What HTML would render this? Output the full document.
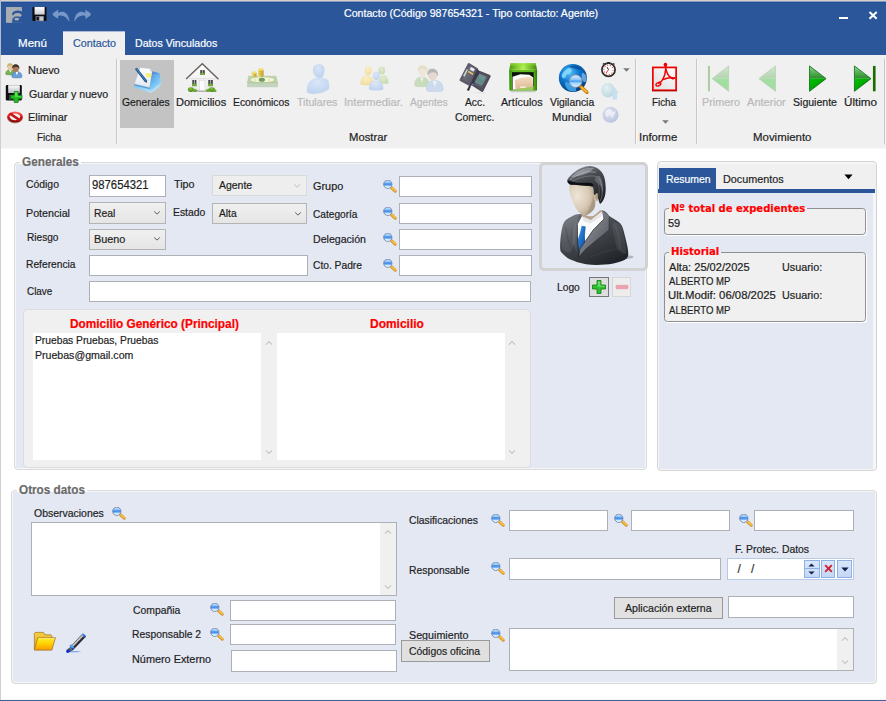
<!DOCTYPE html>
<html lang="es">
<head>
<meta charset="utf-8">
<title>Contacto (Código 987654321 - Tipo contacto: Agente)</title>
<style>
html,body{margin:0;padding:0;}
body{width:886px;height:701px;overflow:hidden;background:#fff;font-family:"Liberation Sans",sans-serif;}
#app{position:relative;width:886px;height:701px;overflow:hidden;background:#fff;}
#app div,#app svg,#app .t{position:absolute;box-sizing:border-box;}
.t{white-space:nowrap;line-height:1;transform-origin:0 50%;-webkit-text-stroke:0.2px;}
</style>
</head>
<body>
<div id="app">
<svg style="left:0;top:0" width="0" height="0"><defs><linearGradient id="fl2" x1="0" y1="0" x2="0" y2="1"><stop offset="0" stop-color="#ffffff"/><stop offset="1" stop-color="#b8bcc6"/></linearGradient><linearGradient id="el1" x1="0" y1="0" x2="0" y2="1"><stop offset="0" stop-color="#ff6a5a"/><stop offset="0.5" stop-color="#d01818"/><stop offset="1" stop-color="#7a0606"/></linearGradient><linearGradient id="gp1" x1="0.2" y1="0" x2="0.8" y2="1"><stop offset="0" stop-color="#4f7ccc"/><stop offset="0.45" stop-color="#62b4ee"/><stop offset="1" stop-color="#a8dcf6"/></linearGradient><linearGradient id="gp3" x1="0" y1="0" x2="1" y2="1"><stop offset="0" stop-color="#7cc4f0"/><stop offset="1" stop-color="#c4e8f8"/></linearGradient><linearGradient id="gp2" x1="0" y1="0" x2="0" y2="1"><stop offset="0" stop-color="#ffffff"/><stop offset="1" stop-color="#e2e9f4"/></linearGradient><linearGradient id="hs1" x1="0" y1="0" x2="0" y2="1"><stop offset="0" stop-color="#ffffff"/><stop offset="1" stop-color="#e9e9e9"/></linearGradient><radialGradient id="hs2" cx="0.45" cy="0.35" r="0.7"><stop offset="0" stop-color="#8cc83c"/><stop offset="1" stop-color="#3c7a14"/></radialGradient><linearGradient id="mn1" x1="0" y1="0" x2="1" y2="0"><stop offset="0" stop-color="#f4e48a"/><stop offset="0.5" stop-color="#d8bc48"/><stop offset="1" stop-color="#c0a030"/></linearGradient><radialGradient id="tt1" cx="0.45" cy="0.3" r="0.8"><stop offset="0" stop-color="#d6e4f8"/><stop offset="1" stop-color="#b4ccf0"/></radialGradient><radialGradient id="im1" cx="0.45" cy="0.3" r="0.8"><stop offset="0" stop-color="#fbeebc"/><stop offset="1" stop-color="#f2d78a"/></radialGradient><radialGradient id="im2" cx="0.45" cy="0.3" r="0.8"><stop offset="0" stop-color="#dfeacb"/><stop offset="1" stop-color="#bcd4a4"/></radialGradient><radialGradient id="im3" cx="0.45" cy="0.3" r="0.8"><stop offset="0" stop-color="#d8e6f8"/><stop offset="1" stop-color="#b2caee"/></radialGradient><linearGradient id="ac1" x1="0" y1="0" x2="1" y2="1"><stop offset="0" stop-color="#7e7d8a"/><stop offset="1" stop-color="#52515e"/></linearGradient><linearGradient id="ac2" x1="0" y1="0" x2="1" y2="1"><stop offset="0" stop-color="#706f7e"/><stop offset="1" stop-color="#4a4957"/></linearGradient><linearGradient id="ar1" x1="0" y1="0" x2="1" y2="0"><stop offset="0" stop-color="#4e9a12"/><stop offset="0.5" stop-color="#b4f050"/><stop offset="1" stop-color="#3e8a0e"/></linearGradient><linearGradient id="ar2" x1="0" y1="0" x2="1" y2="0"><stop offset="0" stop-color="#2f8a0a"/><stop offset="0.15" stop-color="#62bc1c"/><stop offset="0.85" stop-color="#62bc1c"/><stop offset="1" stop-color="#2a7a08"/></linearGradient><linearGradient id="ar3" x1="0" y1="0" x2="0" y2="1"><stop offset="0" stop-color="#f4dcc0"/><stop offset="1" stop-color="#dcb890"/></linearGradient><radialGradient id="vg1" cx="0.38" cy="0.32" r="0.75"><stop offset="0" stop-color="#58c0f8"/><stop offset="0.45" stop-color="#0c78d0"/><stop offset="1" stop-color="#06306c"/></radialGradient><linearGradient id="vg2" x1="0" y1="0" x2="0" y2="1"><stop offset="0" stop-color="#e4f6ff"/><stop offset="0.42" stop-color="#7cc0f8"/><stop offset="0.5" stop-color="#3c90f0"/><stop offset="0.62" stop-color="#8cd0fc"/><stop offset="1" stop-color="#e8f8ff"/></linearGradient><radialGradient id="sm1" cx="0.4" cy="0.35" r="0.75"><stop offset="0" stop-color="#e4f2f2"/><stop offset="1" stop-color="#a8cede"/></radialGradient><radialGradient id="sm2" cx="0.4" cy="0.35" r="0.75"><stop offset="0" stop-color="#e0e4f2"/><stop offset="1" stop-color="#a8b4d8"/></radialGradient><linearGradient id="pd1" x1="1" y1="0" x2="0" y2="1"><stop offset="0" stop-color="#ffffff"/><stop offset="1" stop-color="#dcdcdc"/></linearGradient><linearGradient id="nvl1" x1="0" y1="0" x2="0" y2="1"><stop offset="0" stop-color="#d2e6ce"/><stop offset="1" stop-color="#b4d4b0"/></linearGradient><linearGradient id="nvl2" x1="1" y1="0" x2="0" y2="1"><stop offset="0" stop-color="#9ee49e"/><stop offset="1" stop-color="#aad4a6"/></linearGradient><linearGradient id="nvd1" x1="0" y1="0" x2="0" y2="1"><stop offset="0" stop-color="#8ad88a"/><stop offset="1" stop-color="#2a8a2a"/></linearGradient><linearGradient id="nvd2" x1="0" y1="0" x2="1" y2="1"><stop offset="0" stop-color="#00c400"/><stop offset="0.6" stop-color="#00a000"/><stop offset="1" stop-color="#0a6a0a"/></linearGradient><linearGradient id="mgl" x1="0" y1="0" x2="0" y2="1"><stop offset="0" stop-color="#c4ecff"/><stop offset="0.3" stop-color="#8ac6fa"/><stop offset="0.46" stop-color="#3f86e8"/><stop offset="0.6" stop-color="#5c9ef0"/><stop offset="0.74" stop-color="#c8ecff"/><stop offset="1" stop-color="#f4fcff"/></linearGradient><linearGradient id="av1" x1="0.2" y1="0" x2="0.8" y2="1"><stop offset="0" stop-color="#7c8086"/><stop offset="0.35" stop-color="#4a4e54"/><stop offset="1" stop-color="#1e2226"/></linearGradient><linearGradient id="av2" x1="0" y1="0" x2="1" y2="1"><stop offset="0" stop-color="#8e9298"/><stop offset="0.5" stop-color="#54585e"/><stop offset="1" stop-color="#2a2e32"/></linearGradient><radialGradient id="av3" cx="0.32" cy="0.38" r="0.8"><stop offset="0" stop-color="#efe6d8"/><stop offset="0.55" stop-color="#d9cab6"/><stop offset="1" stop-color="#a8967e"/></radialGradient><linearGradient id="av4" x1="0.3" y1="0" x2="0.7" y2="1"><stop offset="0" stop-color="#8a8e94"/><stop offset="0.3" stop-color="#4a4d52"/><stop offset="1" stop-color="#1a1c20"/></linearGradient><linearGradient id="av5" x1="0" y1="0" x2="1" y2="1"><stop offset="0" stop-color="#3aa0ec"/><stop offset="1" stop-color="#0a3c9c"/></linearGradient><linearGradient id="av6" x1="0" y1="0" x2="1" y2="1"><stop offset="0" stop-color="#9a9ea4"/><stop offset="1" stop-color="#4c5056"/></linearGradient><linearGradient id="fo1" x1="0" y1="0" x2="0" y2="1"><stop offset="0" stop-color="#ffee30"/><stop offset="0.5" stop-color="#ffd000"/><stop offset="1" stop-color="#ff9c00"/></linearGradient><linearGradient id="fo2" x1="0" y1="0" x2="0" y2="1"><stop offset="0" stop-color="#f8d040"/><stop offset="1" stop-color="#e0a018"/></linearGradient></defs></svg>
<div style="left:0px;top:0px;width:886px;height:701px;background:#fff;"></div>
<div style="left:1px;top:1px;width:885px;height:54px;background:#2b579a;"></div>
<div style="left:0px;top:0px;width:886px;height:1px;background:#d6cfc7;"></div>
<div style="left:1px;top:1px;width:885px;height:1px;background:#8a9cc0;"></div>
<div style="left:1px;top:2px;width:885px;height:1px;background:#1f4d99;"></div>
<div style="left:0px;top:0px;width:1px;height:55px;background:#b4bccc;"></div>
<div style="left:0px;top:55px;width:1px;height:646px;background:#cfcfcf;"></div>
<div style="left:0px;top:700px;width:886px;height:1px;background:#3a62a0;"></div>
<div style="left:1px;top:699px;width:885px;height:1px;background:#fbf7f0;"></div>
<svg style="left:5px;top:6px;" width="19" height="18" viewBox="5 6 19 18"><rect x="6.17" y="7.03" width="15.71" height="15.6" fill="#a9aeb5"/><path d="M11.8 13.97 C11.98 13.27 13.15 11.73 14.29 11.15 C15.43 10.57 17.31 10.34 18.63 10.5 C19.95 10.66 21.61 11.41 22.2 12.13 C22.79 12.85 22.79 14.67 22.2 14.83 C21.61 14.99 19.86 13.32 18.63 13.1 C17.40 12.88 15.73 13.15 14.83 13.53 C13.93 13.91 13.71 15.31 13.21 15.38 C12.71 15.45 11.62 14.68 11.8 13.97Z" fill="#2b579a"/><path d="M22.2 14.83 L22.2 22.63 L12.13 22.63 L12.13 19.17 L14.29 16.78 L18.08 16.13 L20.25 17 L22.2 14.83Z" fill="#2b579a"/><ellipse cx="16.78" cy="19.17" rx="2.38" ry="1.41" fill="#a9aeb5"/><rect x="6.17" y="7.03" width="5.96" height="15.6" fill="#a9aeb5"/><path d="M12.13 20.25 L13.97 17.22 L18.08 16.13 L22.2 16.78 L22.2 22.63 L12.13 22.63Z" fill="none"/></svg>
<svg style="left:31px;top:6px;" width="17" height="17" viewBox="31 6 17 17"><defs><linearGradient id="fl1" x1="0" y1="0" x2="0" y2="1"><stop offset="0" stop-color="#ffffff"/><stop offset="1" stop-color="#c9ccd4"/></linearGradient></defs><rect x="32.39" y="7.03" width="14.08" height="14.08" fill="#0c0c10" rx="0.8"/><rect x="34.55" y="7.03" width="10.08" height="7.58" fill="url(#fl1)"/><rect x="35.64" y="16.13" width="8.23" height="4.98" fill="#8c8f96"/><rect x="36.5" y="16.78" width="2.38" height="3.68" fill="#15151a"/><rect x="39.75" y="16.78" width="3.25" height="3.68" fill="#c4c6cc"/></svg>
<svg style="left:51px;top:8px;" width="20" height="15" viewBox="51 8 20 15"><path d="M52.54 14.29 C52.54 12.84 57.23 10.27 58.17 9.96 C59.11 9.65 57.36 12.14 58.17 12.45 C58.98 12.76 61.52 11.40 63.05 11.8 C64.58 12.20 66.33 13.24 67.38 14.83 C68.43 16.42 69.60 20.93 69.33 21.33 C69.06 21.73 66.99 18.16 65.76 17.22 C64.53 16.28 63.23 15.88 61.96 15.7 C60.70 15.52 58.80 15.64 58.17 16.13 C57.54 16.62 59.11 18.94 58.17 18.63 C57.23 18.32 52.54 15.73 52.54 14.29Z" fill="#7898c8"/></svg>
<svg style="left:72px;top:8px;" width="20" height="15" viewBox="72 8 20 15"><path d="M91 14.29 C91.00 12.84 86.31 10.27 85.37 9.96 C84.43 9.65 86.18 12.14 85.37 12.45 C84.56 12.76 82.02 11.40 80.49 11.8 C78.95 12.20 77.21 13.24 76.16 14.83 C75.11 16.42 73.94 20.93 74.21 21.33 C74.48 21.73 76.55 18.16 77.78 17.22 C79.01 16.28 80.30 15.88 81.57 15.7 C82.83 15.52 84.74 15.64 85.37 16.13 C86.00 16.62 84.43 18.94 85.37 18.63 C86.31 18.32 91.00 15.73 91 14.29Z" fill="#7898c8"/></svg>
<span class="t" style="left:343.82px;top:7.79px;font-size:11px;color:#fff;transform:scaleX(0.9663);">Contacto (Código 987654321 - Tipo contacto: Agente)</span>
<div style="left:839px;top:17px;width:9px;height:2px;background:#fff;"></div>
<svg style="left:867px;top:10px;" width="12" height="11" viewBox="0 0 12 11"><path d="M2.5 1.9 L9.7 8.7 M9.7 1.9 L2.5 8.7" stroke="#fff" stroke-width="2" fill="none"/></svg>
<div style="left:63px;top:31px;width:62px;height:1px;background:#a9b8d4;"></div>
<div style="left:63px;top:32px;width:62px;height:23px;background:#f0f0f0;"></div>
<span class="t" style="left:17.90px;top:37.59px;font-size:11px;color:#fff;transform:scaleX(1.0521);">Menú</span>
<span class="t" style="left:72.81px;top:37.59px;font-size:11px;color:#2b579a;transform:scaleX(0.9777);">Contacto</span>
<span class="t" style="left:134.88px;top:37.59px;font-size:11px;color:#fff;transform:scaleX(0.9637);">Datos Vinculados</span>
<div style="left:1px;top:55px;width:885px;height:93px;background:#f0f0f0;"></div>
<div style="left:1px;top:148px;width:885px;height:1px;background:#f8f8f8;"></div>
<div style="left:116px;top:59px;width:1px;height:85px;background:#c6c6c6;"></div>
<div style="left:117px;top:59px;width:1px;height:85px;background:#f8f8f8;"></div>
<div style="left:635px;top:59px;width:1px;height:85px;background:#c6c6c6;"></div>
<div style="left:636px;top:59px;width:1px;height:85px;background:#f8f8f8;"></div>
<div style="left:696px;top:59px;width:1px;height:85px;background:#c6c6c6;"></div>
<div style="left:697px;top:59px;width:1px;height:85px;background:#f8f8f8;"></div>
<div style="left:884px;top:59px;width:1px;height:85px;background:#c6c6c6;"></div>
<div style="left:885px;top:59px;width:1px;height:85px;background:#f8f8f8;"></div>
<div style="left:120px;top:60px;width:54px;height:68px;background:#c3c3c3;"></div>
<span class="t" style="left:28.35px;top:65.29px;font-size:11px;color:#1e1e1e;transform:scaleX(0.9974);">Nuevo</span>
<span class="t" style="left:28.72px;top:88.59px;font-size:11px;color:#1e1e1e;transform:scaleX(0.9670);">Guardar y nuevo</span>
<span class="t" style="left:28.36px;top:111.59px;font-size:11px;color:#1e1e1e;transform:scaleX(0.9905);">Eliminar</span>
<span class="t" style="left:37.24px;top:131.59px;font-size:11px;color:#1e1e1e;transform:scaleX(0.8989);">Ficha</span>
<span class="t" style="left:121.83px;top:96.79px;font-size:11px;color:#1e1e1e;transform:scaleX(0.9388);">Generales</span>
<span class="t" style="left:175.85px;top:96.79px;font-size:11px;color:#1e1e1e;transform:scaleX(1.0007);">Domicilios</span>
<span class="t" style="left:232.90px;top:96.79px;font-size:11px;color:#1e1e1e;transform:scaleX(0.9426);">Económicos</span>
<span class="t" style="left:296.76px;top:96.79px;font-size:11px;color:#b9b9b9;transform:scaleX(0.9680);">Titulares</span>
<span class="t" style="left:343.94px;top:96.79px;font-size:11px;color:#b9b9b9;transform:scaleX(1.0138);">Intermediar.</span>
<span class="t" style="left:409.85px;top:96.79px;font-size:11px;color:#b9b9b9;transform:scaleX(0.9347);">Agentes</span>
<span class="t" style="left:465.35px;top:96.79px;font-size:11px;color:#1e1e1e;transform:scaleX(0.9346);">Acc.</span>
<span class="t" style="left:455.13px;top:111.59px;font-size:11px;color:#1e1e1e;transform:scaleX(0.9462);">Comerc.</span>
<span class="t" style="left:501.35px;top:96.79px;font-size:11px;color:#1e1e1e;transform:scaleX(0.9707);">Artículos</span>
<span class="t" style="left:549.75px;top:96.79px;font-size:11px;color:#1e1e1e;transform:scaleX(0.9421);">Vigilancia</span>
<span class="t" style="left:552.43px;top:111.59px;font-size:11px;color:#1e1e1e;transform:scaleX(1.0263);">Mundial</span>
<span class="t" style="left:348.83px;top:131.59px;font-size:11px;color:#1e1e1e;transform:scaleX(1.0244);">Mostrar</span>
<span class="t" style="left:652.05px;top:96.79px;font-size:11px;color:#1e1e1e;transform:scaleX(0.8913);">Ficha</span>
<span class="t" style="left:639.02px;top:131.59px;font-size:11px;color:#1e1e1e;transform:scaleX(1.0272);">Informe</span>
<span class="t" style="left:701.66px;top:96.79px;font-size:11px;color:#b9b9b9;transform:scaleX(0.9869);">Primero</span>
<span class="t" style="left:747.25px;top:96.79px;font-size:11px;color:#b9b9b9;transform:scaleX(1.0064);">Anterior</span>
<span class="t" style="left:793.12px;top:96.79px;font-size:11px;color:#1e1e1e;transform:scaleX(0.9588);">Siguiente</span>
<span class="t" style="left:843.50px;top:96.79px;font-size:11px;color:#1e1e1e;transform:scaleX(1.0617);">Último</span>
<span class="t" style="left:753.11px;top:131.59px;font-size:11px;color:#1e1e1e;transform:scaleX(1.0396);">Movimiento</span>
<svg style="left:3px;top:60px;" width="22" height="20" viewBox="3 60 22 20"><g opacity="1"><path d="M5.8 74.2 C5.55 73.68 5.83 72.37 6.17 71.7 C6.51 71.03 7.12 70.52 7.82 70.2 C8.53 69.88 9.54 69.80 10.4 69.8 C11.26 69.80 12.28 69.88 12.98 70.2 C13.69 70.52 14.29 71.03 14.63 71.7 C14.97 72.37 15.25 73.68 15 74.2 C14.75 74.72 14.39 74.70 13.16 74.8 C11.93 74.90 8.87 74.90 7.64 74.8 C6.41 74.70 6.04 74.72 5.8 74.2Z" fill="#78b058" stroke="#4f8a38" stroke-width="0.5"/><path d="M9.3 70.05 L10.4 72.8 L11.5 70.05Z" fill="#ffffff"/><ellipse cx="10.2" cy="67.2" rx="2.76" ry="3.24" fill="#e8c8a0"/><path d="M7.2 67.2 C7.07 67.05 6.89 66.15 7.14 65.55 C7.39 64.95 8.01 63.94 8.7 63.6 C9.38 63.27 10.50 63.24 11.25 63.54 C12.00 63.84 12.86 64.69 13.2 65.4 C13.54 66.11 13.41 67.70 13.26 67.8 C13.11 67.90 12.91 66.38 12.3 66 C11.69 65.62 10.32 65.47 9.6 65.55 C8.88 65.62 8.35 66.17 7.95 66.45 C7.55 66.73 7.33 67.35 7.2 67.2Z" fill="#c8b070"/></g><g opacity="1"><path d="M12 77.08 C11.74 76.46 12.03 74.88 12.39 74.08 C12.75 73.28 13.41 72.66 14.16 72.28 C14.91 71.90 15.99 71.80 16.9 71.8 C17.81 71.80 18.89 71.90 19.64 72.28 C20.39 72.66 21.05 73.28 21.41 74.08 C21.77 74.88 22.06 76.46 21.8 77.08 C21.54 77.70 21.15 77.68 19.84 77.8 C18.53 77.92 15.27 77.92 13.96 77.8 C12.65 77.68 12.26 77.70 12 77.08Z" fill="#6c9ed8" stroke="#3f6fb0" stroke-width="0.5"/><path d="M15.72 72.1 L16.9 75.4 L18.08 72.1Z" fill="#ffffff"/><ellipse cx="15.8" cy="68.5" rx="3.04" ry="3.56" fill="#a87858"/><path d="M12.5 68.5 C12.35 68.34 12.15 67.35 12.43 66.69 C12.71 66.03 13.39 64.91 14.15 64.54 C14.91 64.17 16.14 64.14 16.96 64.47 C17.79 64.80 18.73 65.74 19.1 66.52 C19.47 67.30 19.34 69.05 19.17 69.16 C19.01 69.27 18.78 67.59 18.11 67.18 C17.44 66.77 15.94 66.61 15.14 66.69 C14.34 66.77 13.76 67.37 13.32 67.67 C12.88 67.97 12.65 68.66 12.5 68.5Z" fill="#3a3028"/></g></svg>
<svg style="left:4px;top:84px;" width="20" height="20" viewBox="4 84 20 20"><rect x="5.8" y="85" width="16" height="15.5" fill="#101014" rx="1.2"/><rect x="8.2" y="85.2" width="11.6" height="7.8" fill="url(#fl2)"/><rect x="9.5" y="95" width="9" height="5.5" fill="#70747c"/><rect x="10.4" y="95.8" width="2.6" height="4.2" fill="#18181c"/><path d="M14.2 91.5 L18.2 91.5 L18.2 95.2 L22 95.2 L22 98.8 L18.2 98.8 L18.2 102.5 L14.2 102.5 L14.2 98.8 L10.8 98.8 L10.8 95.2 L14.2 95.2Z" fill="#22c022" stroke="#0b7d0b" stroke-width="0.7" stroke-linejoin="round"/><path d="M15 92.3 L17.4 92.3 L17.4 96 L21.2 96 L21.2 96.8 L15 96.8Z" fill="#7ff07a" opacity="0.65"/></svg>
<svg style="left:5px;top:109px;" width="20" height="17" viewBox="5 109 20 17"><ellipse cx="15" cy="117.8" rx="8" ry="5.6" fill="#5a0808" opacity="0.35"/><ellipse cx="15" cy="117" rx="7.8" ry="5.6" fill="url(#el1)"/><ellipse cx="15" cy="116.8" rx="5.2" ry="3.4" fill="#f4f0f0"/><path d="M10.6 114 L19.4 119.8" stroke="#c41414" stroke-width="2.6" stroke-linecap="round"/></svg>
<svg style="left:131px;top:63px;" width="33" height="33" viewBox="131 63 33 33"><path d="M134.57 84.86 L150 88.86 L160.86 84.86 L160.29 86.57 L151.14 92.97 L134.57 87.83Z" fill="url(#gp3)" stroke-linejoin="round"/><path d="M151.14 90 L160.86 80 L160.97 82.57 L160.29 85.43 L151.43 92.29Z" fill="#b4e0f6" stroke-linejoin="round"/><path d="M150.57 87.71 L159.83 75.14 L160.97 79.71 L160.57 83.14 L151.03 90.86Z" fill="#8ccdf2" stroke-linejoin="round"/><path d="M151.83 71.26 L159.43 72.97 L160.17 76.86 L158 84.86 L150.29 89.14 L149.31 87.26Z" fill="url(#gp1)" stroke-linejoin="round"/><path d="M152.86 75.14 L159.14 76.29" fill="none" stroke="#9cc4ec" stroke-width="0.5"/><path d="M152.57 77.71 L158.86 79.03" fill="none" stroke="#9cc4ec" stroke-width="0.5"/><path d="M134 84 L149.43 87.71 L150.29 89.31 L134.57 85.43Z" fill="#4c9cdc"/><path d="M140.29 67.83 L149.89 68.74 L152 72 L149.43 87.26 L134.57 83.83Z" fill="url(#gp2)" stroke="#c4cede" stroke-width="0.3" stroke-linejoin="round"/><path d="M149.89 68.74 L152 72 L149.71 71.26Z" fill="#d4dcea"/><path d="M146.11 72.97 L151.14 73.31 L150.91 77.43 L146 76.86Z" fill="#f6f070"/><path d="M134.91 68.97 L136.97 67.71 L147.26 80.86 L146.57 82.69 L144.86 82Z" fill="#1b4a86"/><path d="M135.83 68.86 L136.74 68.29 L146.11 80.74 L145.43 81.31Z" fill="#4f8ac8"/><path d="M145.14 80.97 L147.03 81.31 L146.46 82.8Z" fill="#5a5a60"/></svg>
<svg style="left:184px;top:62px;" width="37" height="32" viewBox="184 62 37 32"><path d="M202.29 64.4 L216.29 78.11 L215.71 91.43 L189.14 91.43 L188.4 78.11Z" fill="url(#hs1)"/><rect x="189.14" y="78.11" width="26.57" height="1.14" fill="#e2e2e2"/><rect x="196.86" y="90.29" width="10" height="1.54" fill="#a8a8a8"/><rect x="199.6" y="80.17" width="5.37" height="10.11" fill="#fbfbfb" stroke="#cfcfcf" stroke-width="0.4"/><rect x="192.29" y="80" width="4.11" height="6.11" fill="#4a4a50"/><rect x="194.06" y="80" width="0.57" height="6.11" fill="#e8e8e8"/><rect x="192.29" y="83.79" width="4.11" height="2.32" fill="#6fae34"/><rect x="208.29" y="80" width="4.57" height="6.11" fill="#4a4a50"/><rect x="210.29" y="80" width="0.57" height="6.11" fill="#e8e8e8"/><rect x="208.29" y="83.79" width="4.57" height="2.32" fill="#6fae34"/><rect x="200.17" y="70.11" width="4.69" height="4.57" fill="#4a4a50"/><rect x="202.23" y="70.11" width="0.57" height="4.57" fill="#e8e8e8"/><rect x="200.17" y="72.95" width="4.69" height="1.74" fill="#6fae34"/><path d="M186.57 78.46 L202.29 63.71 L218 78.69" fill="none" stroke="#6b625d" stroke-width="1.45" stroke-linejoin="miter" stroke-linecap="round"/><ellipse cx="190.86" cy="89.54" rx="2.97" ry="2.4" fill="url(#hs2)"/><ellipse cx="194.86" cy="90.46" rx="2.06" ry="1.6" fill="url(#hs2)"/><ellipse cx="211.71" cy="89.54" rx="3.14" ry="2.4" fill="url(#hs2)"/><ellipse cx="208" cy="90.57" rx="1.94" ry="1.49" fill="url(#hs2)"/><ellipse cx="214.86" cy="90.86" rx="1.6" ry="1.26" fill="url(#hs2)"/></svg>
<svg style="left:246px;top:66px;" width="33" height="23" viewBox="246 66 33 23"><path d="M247.74 82.57 L277.57 82.57 L277.57 86.86 L247.4 86.86Z" fill="#c2d4bc" stroke="#a8bca4" stroke-width="0.4"/><path d="M248.71 76.17 L275.97 76.17 L277.57 82.69 L247.4 82.69Z" fill="#bcd2a8" stroke="#a4bc94" stroke-width="0.4"/><ellipse cx="262.43" cy="79.71" rx="11.71" ry="2.4" fill="#f6f6d4"/><ellipse cx="261.86" cy="79.71" rx="3.14" ry="2.06" fill="#6f9a60"/><ellipse cx="255" cy="79.83" rx="1.26" ry="0.91" fill="#dfe4b4"/><ellipse cx="269.11" cy="79.83" rx="1.26" ry="0.91" fill="#dfe4b4"/><rect x="251.57" y="72.4" width="4.97" height="4.46" fill="url(#mn1)" rx="1.2"/><ellipse cx="254.03" cy="72.4" rx="2.51" ry="1.26" fill="#f0e07c"/><rect x="257.91" y="69.43" width="5.71" height="7.43" fill="url(#mn1)" rx="1.2"/><ellipse cx="260.77" cy="69.43" rx="2.86" ry="1.37" fill="#f0e07c"/><path d="M258.14 71.71 L263.4 71.71" fill="none" stroke="#c4a63a" stroke-width="0.4"/><path d="M258.14 74 L263.4 74" fill="none" stroke="#c4a63a" stroke-width="0.4"/></svg>
<svg style="left:305px;top:63px;opacity:.88;" width="26" height="32" viewBox="305 63 26 32"><path d="M307.14 92.29 C306.24 90.79 307.09 86.81 307.71 84.86 C308.33 82.91 309.53 81.71 310.86 80.57 C312.19 79.43 313.71 78.43 315.71 78 C317.71 77.57 320.81 77.62 322.86 78 C324.91 78.38 326.95 79.05 328 80.29 C329.05 81.53 329.04 83.96 329.14 85.43 C329.24 86.91 329.90 87.90 328.57 89.14 C327.24 90.38 323.71 92.07 321.14 92.86 C318.57 93.65 315.47 93.98 313.14 93.89 C310.81 93.80 308.04 93.80 307.14 92.29Z" fill="url(#tt1)"/><path d="M313.14 72.29 C312.81 70.77 312.86 68.45 313.43 67.14 C314.00 65.83 315.28 64.83 316.57 64.4 C317.86 63.97 319.85 64.06 321.14 64.57 C322.43 65.07 323.80 66.05 324.29 67.43 C324.79 68.81 324.40 71.29 324.11 72.86 C323.82 74.43 323.44 75.98 322.57 76.86 C321.69 77.73 320.05 78.20 318.86 78.11 C317.67 78.02 316.38 77.26 315.43 76.29 C314.48 75.32 313.47 73.82 313.14 72.29Z" fill="url(#tt1)"/><path d="M314.86 79.71 L318.57 83.14 L320.57 79.14" fill="none" stroke="#e6effb" stroke-width="0.6"/></svg>
<svg style="left:359px;top:65px;opacity:.85;" width="31" height="27" viewBox="359 65 31 27"><path d="M360.57 84.23 C360.14 83.24 360.57 80.57 361.21 79.2 C361.85 77.83 363.04 76.53 364.43 76 C365.82 75.47 368.18 75.47 369.57 76 C370.96 76.53 372.15 77.83 372.79 79.2 C373.43 80.57 373.86 83.24 373.43 84.23 C373.00 85.22 371.82 84.99 370.21 85.14 C368.60 85.29 365.40 85.29 363.79 85.14 C362.18 84.99 361.00 85.22 360.57 84.23Z" fill="url(#im1)"/><ellipse cx="368.29" cy="70.86" rx="3.58" ry="4.15" fill="url(#im1)"/><path d="M378.86 82.91 C378.55 82.04 378.86 79.71 379.33 78.51 C379.80 77.31 380.67 76.18 381.69 75.71 C382.71 75.24 384.44 75.24 385.46 75.71 C386.48 76.18 387.34 77.31 387.81 78.51 C388.28 79.71 388.60 82.04 388.29 82.91 C387.98 83.78 387.11 83.58 385.93 83.71 C384.75 83.84 382.39 83.84 381.21 83.71 C380.03 83.58 379.17 83.78 378.86 82.91Z" fill="url(#im2)"/><ellipse cx="381.71" cy="70.46" rx="3.37" ry="3.9" fill="url(#im2)"/><path d="M369.03 89.34 C368.56 88.32 369.03 85.57 369.73 84.16 C370.44 82.75 371.73 81.41 373.26 80.86 C374.79 80.31 377.38 80.31 378.91 80.86 C380.44 81.41 381.74 82.75 382.44 84.16 C383.14 85.57 383.61 88.32 383.14 89.34 C382.67 90.36 381.37 90.13 379.61 90.29 C377.85 90.45 374.32 90.45 372.56 90.29 C370.80 90.13 369.50 90.36 369.03 89.34Z" fill="url(#im3)"/><ellipse cx="376.29" cy="75.83" rx="3.58" ry="4.15" fill="url(#im3)"/></svg>
<svg style="left:413px;top:63px;opacity:.85;" width="32" height="30" viewBox="413 63 32 30"><g opacity="1"><path d="M414.86 85.44 C414.49 84.47 414.91 81.99 415.42 80.73 C415.93 79.47 416.87 78.50 417.94 77.9 C419.01 77.30 420.55 77.14 421.86 77.14 C423.17 77.14 424.71 77.30 425.78 77.9 C426.85 78.50 427.79 79.47 428.3 80.73 C428.81 81.99 429.23 84.47 428.86 85.44 C428.49 86.41 427.93 86.38 426.06 86.57 C424.19 86.76 419.53 86.76 417.66 86.57 C415.79 86.38 415.23 86.41 414.86 85.44Z" fill="#c2d8b4" stroke="#b4cca6" stroke-width="0.5"/><path d="M420.18 77.61 L421.86 82.8 L423.54 77.61Z" fill="#eef2ee"/><ellipse cx="422.74" cy="71.43" rx="4.31" ry="5.06" fill="#efe4d6"/><path d="M418.06 71.43 C417.85 71.20 417.57 69.79 417.96 68.85 C418.35 67.91 419.33 66.33 420.4 65.81 C421.47 65.29 423.21 65.24 424.38 65.71 C425.55 66.18 426.91 67.51 427.43 68.62 C427.95 69.73 427.75 72.22 427.52 72.37 C427.28 72.53 426.97 70.14 426.02 69.55 C425.07 68.96 422.94 68.73 421.81 68.85 C420.68 68.97 419.86 69.83 419.23 70.26 C418.61 70.69 418.27 71.67 418.06 71.43Z" fill="#e4dcbc"/></g><g opacity="1"><path d="M426.57 90.13 C426.13 89.01 426.63 86.15 427.23 84.7 C427.83 83.25 428.92 82.13 430.18 81.44 C431.44 80.75 433.24 80.57 434.77 80.57 C436.30 80.57 438.10 80.75 439.36 81.44 C440.62 82.13 441.72 83.25 442.32 84.7 C442.92 86.15 443.41 89.01 442.97 90.13 C442.53 91.25 441.88 91.21 439.69 91.43 C437.50 91.65 432.04 91.65 429.85 91.43 C427.66 91.21 427.01 91.25 426.57 90.13Z" fill="#c6d8ec" stroke="#b4c8e0" stroke-width="0.5"/><path d="M432.8 81.11 L434.77 87.09 L436.74 81.11Z" fill="#eef2f6"/><ellipse cx="432.69" cy="75.14" rx="4.63" ry="5.43" fill="#e4d6c8"/><path d="M427.66 75.14 C427.44 74.89 427.14 73.38 427.56 72.38 C427.98 71.38 429.02 69.67 430.17 69.11 C431.32 68.55 433.19 68.51 434.45 69.01 C435.71 69.51 437.15 70.94 437.71 72.13 C438.27 73.32 438.06 75.98 437.81 76.15 C437.56 76.32 437.23 73.76 436.21 73.13 C435.19 72.50 432.90 72.25 431.68 72.38 C430.46 72.51 429.58 73.43 428.91 73.89 C428.24 74.35 427.89 75.39 427.66 75.14Z" fill="#acacac"/></g></svg>
<svg style="left:458px;top:62px;" width="34" height="32" viewBox="458 62 34 32"><path d="M469.29 92.29 C468.82 92.48 479.29 93.43 481.86 93.43 C484.43 93.43 486.80 92.48 484.71 92.29 C482.62 92.10 469.76 92.10 469.29 92.29Z" fill="#d8d8dc" opacity="0.5"/><path d="M468.83 64.29 L477 69.31 L469.97 84.86 L460.71 80Z" fill="url(#ac1)" stroke="#5c5b68" stroke-width="2.4" stroke-linejoin="round"/><path d="M479.69 72 L489.51 76.17 L482.2 90.8 L472.83 84.74Z" fill="url(#ac2)" stroke="#4e4d5a" stroke-width="2.4" stroke-linejoin="round"/><path d="M477.4 69.43 L479.46 71.6 L472.43 84.86 L470.2 85.31Z" fill="#3a3848" stroke="#3a3848" stroke-width="0.8" stroke-linejoin="round"/><path d="M479.46 74.11 L486.14 77.09 L481.63 85.31 L475.11 81.89Z" fill="#5e8a88" stroke="#8a8c96" stroke-width="0.6" stroke-linejoin="round"/><path d="M480.14 75.14 L485.17 77.43 L483.57 80.4 L478.54 78Z" fill="#6e9a96" opacity="0.7"/><path d="M471 67.03 L474.71 68.97 L473.57 71.49 L469.97 69.66Z" fill="#f0f2fa" stroke="#c8cce0" stroke-width="0.3"/><path d="M468.71 70.69 L473.4 73.43 L472.71 74.91 L468.03 72.29Z" fill="#e8c65c"/><path d="M466.71 69.14 L467.91 69.77 L464.6 76.63 L463.11 75.83Z" fill="#d6d8cc"/><path d="M469.4 85.77 L470.54 86.34 L468.83 90.57 L467.23 90Z" fill="#2a2a32" stroke="#2a2a32" stroke-width="0.6" stroke-linejoin="round"/><path d="M472.14 83.43 L473.57 84.17 L473.17 85.31 L471.86 84.57Z" fill="#5a9ce0"/></svg>
<svg style="left:508px;top:62px;" width="31" height="32" viewBox="508 62 31 32"><rect x="510.57" y="90" width="25.14" height="2.29" fill="#c4ccc4" rx="0.6"/><path d="M509.14 69.71 L537.14 69.71 L536.97 90.57 L509.43 90.57Z" fill="url(#ar2)"/><path d="M510.57 63.14 L535.71 63.14 L537.14 69.71 L509.14 69.71Z" fill="url(#ar1)"/><path d="M510.57 63.14 L535.71 63.14 L536.29 65.43 L510 65.43Z" fill="#8ee030" opacity="0.5"/><rect x="512" y="72.17" width="21.71" height="17.54" fill="#0c1408"/><path d="M512.57 76.86 L520.29 74.29 L529.43 74.86 L533.14 77.43 L533.14 89.71 L512.57 89.71Z" fill="#fafafa"/><path d="M514.86 80.29 L521.43 77.71 L529.43 76.86 L532.29 78 L533.43 89.14 L515.71 89.71Z" fill="url(#ar3)"/><rect x="520.17" y="86.46" width="5.83" height="1.37" fill="#f8f4f0"/><path d="M512 89.71 L533.71 86.57 L533.71 89.89 L512 89.89Z" fill="#86d040" opacity="0.7"/></svg>
<svg style="left:557px;top:63px;" width="33" height="32" viewBox="557 63 33 32"><ellipse cx="572.86" cy="78" rx="14" ry="14" fill="url(#vg1)"/><path d="M561.71 75.14 C562.04 73.86 563.90 71.48 565.14 70.29 C566.38 69.10 568.00 68.00 569.14 68 C570.28 68.00 571.90 69.39 572 70.29 C572.10 71.20 570.57 72.72 569.71 73.43 C568.85 74.14 567.62 73.86 566.86 74.57 C566.10 75.28 565.76 77.14 565.14 77.71 C564.52 78.28 563.71 78.43 563.14 78 C562.57 77.57 561.38 76.42 561.71 75.14Z" fill="#8cdcfc" opacity="0.85"/><path d="M565.71 82 C566.57 81.57 569.14 82.95 570.86 84 C572.58 85.05 575.33 87.05 576 88.29 C576.67 89.53 576.00 91.05 574.86 91.43 C573.72 91.81 570.66 91.38 569.14 90.57 C567.62 89.76 566.28 88.00 565.71 86.57 C565.14 85.14 564.85 82.43 565.71 82Z" fill="#48b0f0" opacity="0.8"/><path d="M582.29 72.86 C582.96 72.38 585.04 73.81 585.71 75.14 C586.38 76.47 586.57 79.72 586.29 80.86 C586.00 82.00 584.76 82.48 584 82 C583.24 81.52 582.00 79.52 581.71 78 C581.43 76.48 581.62 73.34 582.29 72.86Z" fill="#7cb8e8" opacity="0.8"/><path d="M569.14 66.57 C569.52 66.14 573.90 65.33 576 65.71 C578.10 66.09 581.23 68.24 581.71 68.86 C582.19 69.48 580.19 69.53 578.86 69.43 C577.53 69.34 575.33 68.77 573.71 68.29 C572.09 67.81 568.76 67.00 569.14 66.57Z" fill="#0a3c80" opacity="0.6"/><path d="M580.86 86.86 L586.86 92.29" stroke="#b87408" stroke-width="3.4" stroke-linecap="round"/><path d="M581.43 87.26 L586.63 91.94" stroke="#fcb424" stroke-width="2" stroke-linecap="round"/><ellipse cx="575.71" cy="81.14" rx="6.17" ry="6.17" fill="url(#vg2)" stroke="#a898b0" stroke-width="0.9"/></svg>
<svg style="left:600px;top:61px;" width="18" height="18" viewBox="600 61 18 18"><rect x="607.2" y="62" width="2.8" height="2.2" fill="#222"/><path d="M602.2 64.2 L604 62.8 L605.2 64.2Z" fill="#222"/><path d="M612 64.2 L613.8 63 L615.2 64.6Z" fill="#222"/><ellipse cx="608.5" cy="69.8" rx="6.6" ry="6.6" fill="#fff" stroke="#2c2c2c" stroke-width="1.7"/><circle cx="608.5" cy="69.8" r="4.6" fill="none" stroke="#f05a5a" stroke-width="1.1" stroke-dasharray="1.2 1.6"/><path d="M608.5 69.8 L606 73" fill="none" stroke="#f03030" stroke-width="1"/><path d="M608.5 69.8 L607.2 67.2" fill="none" stroke="#222" stroke-width="1"/></svg>
<svg style="left:623.2px;top:67.6px;" width="7" height="4" viewBox="0 0 7 4"><path d="M0.2 0.3 H6.8 L3.5 3.8 Z" fill="#777"/></svg>
<svg style="left:600px;top:82px;opacity:.8;" width="20" height="19" viewBox="600 82 20 19"><ellipse cx="608" cy="90.2" rx="6.8" ry="7.2" fill="url(#sm1)"/><path d="M612.5 99.5 L612.5 92 L611 92 L615 87.5 L618.8 93 L617 93 L617.2 99.2Z" fill="#c0dcf0"/></svg>
<svg style="left:601px;top:105px;opacity:.8;" width="20" height="21" viewBox="601 105 20 21"><ellipse cx="610.5" cy="116" rx="7" ry="2" fill="#d8d8dc" opacity="0.6"/><ellipse cx="610.5" cy="114.8" rx="8" ry="8" fill="url(#sm2)"/><path d="M606 110.5 C606.75 109.67 608.83 108.75 610 109 C611.17 109.25 612.00 111.67 613 112 C614.00 112.33 615.83 110.50 616 111 C616.17 111.50 614.67 113.83 614 115 C613.33 116.17 612.67 118.00 612 118 C611.33 118.00 610.83 115.17 610 115 C609.17 114.83 607.75 117.17 607 117 C606.25 116.83 605.67 115.08 605.5 114 C605.33 112.92 605.25 111.33 606 110.5Z" fill="#eef0f8" opacity="0.9"/></svg>
<svg style="left:661.5px;top:120.2px;" width="7" height="4" viewBox="0 0 7 4"><path d="M0.2 0.3 H6.8 L3.5 3.8 Z" fill="#777"/></svg>
<svg style="left:650px;top:61px;" width="29" height="32" viewBox="650 61 29 32"><rect x="652.86" y="67.43" width="23.26" height="22.86" fill="url(#pd1)" stroke="#f00000" stroke-width="1.7"/><path d="M652 90.86 L677.03 90.86" fill="none" stroke="#a00000" stroke-width="0.8"/><ellipse cx="665.43" cy="64.86" rx="1.83" ry="2.06" fill="#f00000"/><path d="M665.43 64.86 C665.52 65.62 665.57 67.81 666 69.43 C666.43 71.05 667.19 73.24 668 74.57 C668.81 75.90 669.67 76.86 670.86 77.43 C672.05 78.00 674.43 77.91 675.14 78" fill="none" stroke="#f00000" stroke-width="1.5" stroke-linecap="round"/><path d="M665.71 68.86 C665.52 69.91 665.24 73.14 664.57 75.14 C663.90 77.14 662.76 79.43 661.71 80.86 C660.66 82.29 658.86 83.23 658.29 83.71" fill="none" stroke="#f00000" stroke-width="1.5"/><path d="M663.14 79.71 C663.76 79.47 665.67 78.62 666.86 78.29 C668.05 77.96 669.24 77.61 670.29 77.71 C671.34 77.80 672.38 78.86 673.14 78.86 C673.90 78.86 674.57 77.90 674.86 77.71" fill="none" stroke="#f00000" stroke-width="1.4"/><ellipse cx="658.4" cy="84.17" rx="2.63" ry="1.6" fill="none" stroke="#f00000" stroke-width="1.3" transform="rotate(-28 658.4 84.17)"/></svg>
<svg style="left:706px;top:64px;" width="25" height="29" viewBox="706 64 25 29"><path d="M728.66 65.93 L712.2 78.63 L728.66 78.63Z" fill="url(#nvl1)"/><path d="M728.66 78.63 L712.2 78.63 L728.66 91.33Z" fill="url(#nvl2)"/><path d="M728.66 65.93 L712.2 78.63 L728.66 91.33Z" fill="none" stroke="#b6d2b2" stroke-width="0.8" stroke-linejoin="round"/><rect x="707.93" y="65.93" width="2.03" height="25.41" fill="#aacda2"/></svg>
<svg style="left:757px;top:64px;" width="21" height="29" viewBox="757 64 21 29"><path d="M775.51 65.93 L758.94 78.63 L775.51 78.63Z" fill="url(#nvl1)"/><path d="M775.51 78.63 L758.94 78.63 L775.51 91.33Z" fill="url(#nvl2)"/><path d="M775.51 65.93 L758.94 78.63 L775.51 91.33Z" fill="none" stroke="#b6d2b2" stroke-width="0.8" stroke-linejoin="round"/></svg>
<svg style="left:807px;top:64px;" width="22" height="29" viewBox="807 64 22 29"><path d="M809.52 65.93 L826.08 78.63 L809.52 78.63Z" fill="url(#nvd1)"/><path d="M809.52 78.63 L826.08 78.63 L809.52 91.33Z" fill="url(#nvd2)"/><path d="M809.52 65.93 L826.08 78.63 L809.52 91.33Z" fill="none" stroke="#0a6a12" stroke-width="0.8" stroke-linejoin="round"/></svg>
<svg style="left:852px;top:64px;" width="26" height="29" viewBox="852 64 26 29"><path d="M854.43 65.93 L871 78.63 L854.43 78.63Z" fill="url(#nvd1)"/><path d="M854.43 78.63 L871 78.63 L854.43 91.33Z" fill="url(#nvd2)"/><path d="M854.43 65.93 L871 78.63 L854.43 91.33Z" fill="none" stroke="#0a6a12" stroke-width="0.8" stroke-linejoin="round"/><rect x="872.93" y="65.93" width="2.64" height="25.41" fill="#1c6a04"/></svg>
<div style="left:14px;top:162px;width:633px;height:308px;background:#e4e8f3;border:1px solid #dadada;border-radius:4px;box-shadow:inset 0 0 0 1px #f4f6fa;"></div>
<div style="left:20px;top:162px;width:61px;height:2px;background:#fff;"></div>
<span class="t" style="left:22.01px;top:156.10px;font-size:12px;color:#6b6b6b;font-weight:bold;transform:scaleX(0.9805);">Generales</span>
<span class="t" style="left:26.43px;top:179.29px;font-size:11px;color:#1e1e1e;transform:scaleX(0.9442);">Código</span>
<div style="left:89px;top:175px;width:77px;height:22px;background:#fff;border:1px solid #adb0b7;"></div>
<span class="t" style="left:91.75px;top:179.45px;font-size:12.5px;color:#1e1e1e;transform:scaleX(0.9037);">987654321</span>
<span class="t" style="left:173.65px;top:179.09px;font-size:11px;color:#1e1e1e;transform:scaleX(0.9768);">Tipo</span>
<div style="left:212px;top:175px;width:95px;height:21px;background:#eeeeee;border:1px solid #d9d9d9;"></div>
<svg style="left:292.8px;top:182.6px;" width="8" height="6" viewBox="0 0 8 6"><path d="M1.2 1.5 L4 4.1 L6.8 1.5" stroke="#bdbdbd" stroke-width="1" fill="none"/></svg>
<span class="t" style="left:218.55px;top:180.19px;font-size:11px;color:#1e1e1e;transform:scaleX(0.9507);">Agente</span>
<span class="t" style="left:26.08px;top:207.69px;font-size:11px;color:#1e1e1e;transform:scaleX(0.9712);">Potencial</span>
<div style="left:89px;top:202px;width:77px;height:22px;background:linear-gradient(#f0f0f0,#e5e5e5);border:1px solid #b4b4b4;"></div>
<svg style="left:152.8px;top:209.6px;" width="8" height="6" viewBox="0 0 8 6"><path d="M1.2 1.5 L4 4.1 L6.8 1.5" stroke="#5c5c5c" stroke-width="1" fill="none"/></svg>
<span class="t" style="left:94.30px;top:207.89px;font-size:11px;color:#1e1e1e;transform:scaleX(0.9415);">Real</span>
<span class="t" style="left:173.00px;top:206.79px;font-size:11px;color:#1e1e1e;transform:scaleX(0.9445);">Estado</span>
<div style="left:212px;top:203px;width:95px;height:21px;background:linear-gradient(#f0f0f0,#e5e5e5);border:1px solid #b4b4b4;"></div>
<svg style="left:293.8px;top:210.6px;" width="8" height="6" viewBox="0 0 8 6"><path d="M1.2 1.5 L4 4.1 L6.8 1.5" stroke="#5c5c5c" stroke-width="1" fill="none"/></svg>
<span class="t" style="left:218.55px;top:208.29px;font-size:11px;color:#1e1e1e;transform:scaleX(0.9270);">Alta</span>
<span class="t" style="left:27.02px;top:231.99px;font-size:11px;color:#1e1e1e;transform:scaleX(0.9173);">Riesgo</span>
<div style="left:89px;top:229px;width:77px;height:21px;background:linear-gradient(#f0f0f0,#e5e5e5);border:1px solid #b4b4b4;"></div>
<svg style="left:152.8px;top:235.6px;" width="8" height="6" viewBox="0 0 8 6"><path d="M1.2 1.5 L4 4.1 L6.8 1.5" stroke="#5c5c5c" stroke-width="1" fill="none"/></svg>
<span class="t" style="left:94.26px;top:233.59px;font-size:11px;color:#1e1e1e;transform:scaleX(0.9839);">Bueno</span>
<span class="t" style="left:25.51px;top:259.39px;font-size:11px;color:#1e1e1e;transform:scaleX(0.9307);">Referencia</span>
<div style="left:89px;top:255px;width:219px;height:21px;background:#fff;border:1px solid #adb0b7;"></div>
<span class="t" style="left:27.35px;top:285.59px;font-size:11px;color:#1e1e1e;transform:scaleX(0.9002);">Clave</span>
<div style="left:89px;top:281px;width:442px;height:21px;background:#fff;border:1px solid #adb0b7;"></div>
<span class="t" style="left:313.31px;top:181.09px;font-size:11px;color:#1e1e1e;transform:scaleX(0.9897);">Grupo</span>
<svg style="left:383.2px;top:179.5px;" width="14" height="13.5" viewBox="0 0 28 27"><path d="M17.4 15.8 L24.4 22.4" stroke="#c98a1c" stroke-width="5.8" stroke-linecap="round"/><path d="M17.8 15.6 L24.4 21.8" stroke="#ffc23c" stroke-width="3.2" stroke-linecap="round"/>
<circle cx="9.6" cy="8.6" r="8.3" fill="url(#mgl)" stroke="#7c86b0" stroke-width="1.9"/></svg>
<div style="left:399px;top:176px;width:133px;height:21px;background:#fff;border:1px solid #adb0b7;"></div>
<span class="t" style="left:313.34px;top:208.89px;font-size:11px;color:#1e1e1e;transform:scaleX(0.9207);">Categoría</span>
<svg style="left:383.2px;top:207px;" width="14" height="13.5" viewBox="0 0 28 27"><path d="M17.4 15.8 L24.4 22.4" stroke="#c98a1c" stroke-width="5.8" stroke-linecap="round"/><path d="M17.8 15.6 L24.4 21.8" stroke="#ffc23c" stroke-width="3.2" stroke-linecap="round"/>
<circle cx="9.6" cy="8.6" r="8.3" fill="url(#mgl)" stroke="#7c86b0" stroke-width="1.9"/></svg>
<div style="left:399px;top:203px;width:133px;height:21px;background:#fff;border:1px solid #adb0b7;"></div>
<span class="t" style="left:312.98px;top:233.79px;font-size:11px;color:#1e1e1e;transform:scaleX(0.9632);">Delegación</span>
<svg style="left:383.2px;top:232.5px;" width="14" height="13.5" viewBox="0 0 28 27"><path d="M17.4 15.8 L24.4 22.4" stroke="#c98a1c" stroke-width="5.8" stroke-linecap="round"/><path d="M17.8 15.6 L24.4 21.8" stroke="#ffc23c" stroke-width="3.2" stroke-linecap="round"/>
<circle cx="9.6" cy="8.6" r="8.3" fill="url(#mgl)" stroke="#7c86b0" stroke-width="1.9"/></svg>
<div style="left:399px;top:229px;width:133px;height:21px;background:#fff;border:1px solid #adb0b7;"></div>
<span class="t" style="left:313.34px;top:259.79px;font-size:11px;color:#1e1e1e;transform:scaleX(0.9309);">Cto. Padre</span>
<svg style="left:383.2px;top:258.5px;" width="14" height="13.5" viewBox="0 0 28 27"><path d="M17.4 15.8 L24.4 22.4" stroke="#c98a1c" stroke-width="5.8" stroke-linecap="round"/><path d="M17.8 15.6 L24.4 21.8" stroke="#ffc23c" stroke-width="3.2" stroke-linecap="round"/>
<circle cx="9.6" cy="8.6" r="8.3" fill="url(#mgl)" stroke="#7c86b0" stroke-width="1.9"/></svg>
<div style="left:399px;top:255px;width:133px;height:21px;background:#fff;border:1px solid #adb0b7;"></div>
<div style="left:539px;top:162px;width:109px;height:109px;background:#e4e8f3;border:3.5px solid #d2d2d2;border-radius:5.5px;"></div>
<svg style="left:543px;top:165px;" width="101" height="102" viewBox="543 165 101 102"><ellipse cx="626.24" cy="257.03" rx="7.22" ry="1.88" fill="#3a3c44" opacity="0.3"/><path d="M560.18 248.87 C559.92 245.73 560.32 239.19 560.97 234.75 C561.62 230.31 562.41 225.21 564.11 222.2 C565.81 219.19 568.50 218.06 571.17 216.7 C573.84 215.34 576.84 213.91 580.11 214.04 C583.38 214.17 587.04 218.09 590.78 217.49 C594.52 216.89 599.28 210.56 602.55 210.43 C605.82 210.30 607.38 214.48 610.39 216.7 C613.40 218.92 618.16 220.49 620.59 223.76 C623.02 227.03 623.73 231.09 624.99 236.32 C626.25 241.55 628.86 250.97 628.13 255.15 C627.40 259.33 624.46 259.85 620.59 261.42 C616.72 262.99 610.65 264.09 604.9 264.56 C599.15 265.03 591.82 265.09 586.07 264.25 C580.32 263.41 574.30 261.32 570.38 259.54 C566.46 257.76 564.24 255.36 562.54 253.58 C560.84 251.80 560.44 252.01 560.18 248.87Z" fill="url(#av1)"/><path d="M564.11 223.76 C565.86 220.94 570.39 219.11 572.74 217.8 C575.09 216.49 577.63 214.40 578.23 215.92 C578.83 217.44 577.00 222.46 576.35 226.9 C575.70 231.34 575.30 238.41 574.31 242.59 C573.31 246.78 572.34 250.96 570.38 252.01 C568.42 253.06 563.90 251.75 562.54 248.87 C561.18 245.99 561.96 238.94 562.22 234.75 C562.48 230.56 562.36 226.58 564.11 223.76Z" fill="#8a8e94" opacity="0.2"/><path d="M612.75 223.76 C613.79 221.93 618.63 222.71 620.59 225.33 C622.55 227.95 623.60 234.75 624.52 239.46 C625.44 244.17 627.27 252.01 626.09 253.58 C624.91 255.15 619.42 251.75 617.46 248.87 C615.50 245.99 615.11 240.50 614.32 236.32 C613.54 232.13 611.71 225.59 612.75 223.76Z" fill="#6e7278" opacity="0.25"/><path d="M583.25 210.9 C583.90 210.19 584.42 214.29 586.07 215.13 C587.72 215.97 590.64 216.78 593.13 215.92 C595.62 215.06 599.59 209.91 600.98 209.96 C602.37 210.01 603.15 214.32 601.45 216.23 C599.75 218.14 594.00 220.89 590.78 221.41 C587.56 221.93 583.40 221.12 582.15 219.37 C580.89 217.62 582.60 211.61 583.25 210.9Z" fill="#b8a48c"/><path d="M577.44 224.55 L581.68 216.23 L590.78 220.31 L602.08 211.53 L603.65 219.37 L593.13 230.04 L586.07 240.24 L580.11 248.87 L577.44 236.32Z" fill="#fbfbfb"/><path d="M581.68 216.23 L590.78 220.31 L602.08 211.53 L601.45 216.23 L590.78 223.45 L583.72 221.41Z" fill="#e4e6ea"/><path d="M581.68 225.65 L585.76 226.59 L584.82 234.75 L585.13 242.59 L579.48 251.7 L577.6 240.24 L580.11 232.39Z" fill="url(#av5)"/><path d="M602.55 210.9 L609.3 216.23 L608.98 230.04 L586.07 248.87 L578.54 257.03 L580.11 248.87 L586.07 240.24 L593.13 230.04 L603.65 219.37Z" fill="url(#av6)"/><path d="M603.65 219.37 L593.13 230.04 L586.07 240.24 L580.11 248.87 L578.54 257.03" fill="none" stroke="#16181c" stroke-width="0.5"/><path d="M609.3 216.23 L608.98 230.04 L586.07 248.87 L578.54 257.03" fill="none" stroke="#1a1c20" stroke-width="0.45"/><path d="M578.23 215.13 L581.68 216.23 L577.44 224.55 L577.6 240.24 L578.54 257.03 L572.74 242.59 L573.83 226.9Z" fill="url(#av2)"/><path d="M577.44 224.55 L577.6 240.24 L578.54 257.03" fill="none" stroke="#16181c" stroke-width="0.45"/><path d="M570.07 184.54 C571.75 183.23 576.22 184.28 579.8 184.54 C583.38 184.80 589.17 184.41 591.57 186.11 C593.98 187.81 593.63 191.60 594.23 194.74 C594.83 197.88 595.48 202.25 595.17 204.94 C594.86 207.63 593.87 209.20 592.35 210.9 C590.83 212.60 587.95 214.61 586.07 215.13 C584.19 215.65 582.67 215.08 581.05 214.04 C579.43 213.00 577.81 211.16 576.35 208.86 C574.89 206.56 573.37 202.98 572.27 200.23 C571.17 197.48 570.12 195.00 569.75 192.38 C569.38 189.76 568.40 185.85 570.07 184.54Z" fill="url(#av3)"/><path d="M586.07 215.13 C586.59 215.47 590.83 212.60 592.35 210.9 C593.87 209.20 594.86 207.63 595.17 204.94 C595.48 202.25 594.70 195.53 594.23 194.74 C593.76 193.96 593.19 197.88 592.35 200.23 C591.51 202.58 590.26 206.38 589.21 208.86 C588.16 211.34 585.55 214.79 586.07 215.13Z" fill="#9c8a74" opacity="0.55"/><ellipse cx="596.43" cy="196.78" rx="2.67" ry="4.71" fill="#cdbca6"/><ellipse cx="596.74" cy="197.09" rx="1.26" ry="2.82" fill="#a8967e"/><path d="M567.24 180.14 C567.76 178.36 570.38 175.56 572.74 173.55 C575.10 171.54 578.36 169.31 581.37 168.06 C584.38 166.81 587.77 165.76 590.78 166.02 C593.79 166.28 597.19 167.85 599.41 169.63 C601.63 171.41 603.07 173.68 604.12 176.69 C605.17 179.70 605.61 184.28 605.69 187.68 C605.77 191.08 605.45 194.42 604.59 197.09 C603.73 199.76 601.56 203.42 600.51 203.68 C599.46 203.94 598.83 200.41 598.31 198.66 C597.79 196.91 598.05 193.82 597.37 193.17 C596.69 192.52 595.01 195.79 594.23 194.74 C593.45 193.69 594.02 188.38 592.66 186.89 C591.30 185.40 589.13 186.13 586.07 185.79 C583.01 185.45 577.05 185.11 574.31 184.85 C571.56 184.59 570.78 185.00 569.6 184.22 C568.42 183.44 566.72 181.92 567.24 180.14Z" fill="url(#av4)"/><path d="M571.17 176.69 C571.69 175.83 577.84 171.98 581.37 170.73 C584.90 169.47 591.57 168.69 592.35 169.16 C593.13 169.63 588.42 172.43 586.07 173.55 C583.72 174.68 580.71 175.39 578.23 175.91 C575.75 176.43 570.65 177.55 571.17 176.69Z" fill="#b4b8be" opacity="0.55"/><path d="M594.7 179.83 C594.52 178.13 598.10 175.39 599.41 175.91 C600.72 176.43 601.95 180.22 602.55 182.97 C603.15 185.72 603.36 191.86 603.02 192.38 C602.68 192.90 601.90 188.20 600.51 186.11 C599.12 184.02 594.88 181.53 594.7 179.83Z" fill="#8a8e94" opacity="0.5"/><path d="M568.03 180.61 C569.21 180.35 572.87 182.26 576.66 182.65 C580.45 183.04 588.03 182.39 590.78 182.97 C593.52 183.55 593.91 185.64 593.13 186.11 C592.35 186.58 589.21 186.00 586.07 185.79 C582.93 185.58 577.05 185.11 574.31 184.85 C571.56 184.59 570.65 184.93 569.6 184.22 C568.55 183.51 566.85 180.87 568.03 180.61Z" fill="#0e1014"/><path d="M570.38 179.52 C571.69 178.74 575.35 176.07 578.23 174.81 C581.11 173.55 584.76 172.40 587.64 171.98 C590.52 171.56 594.18 172.25 595.49 172.3" fill="none" stroke="#c0c4ca" stroke-width="0.9" opacity="0.6" stroke-linecap="round"/><path d="M572.74 181.08 C574.18 180.48 578.36 178.34 581.37 177.48 C584.38 176.62 588.11 176.04 590.78 175.91 C593.45 175.78 596.27 176.56 597.37 176.69" fill="none" stroke="#9a9ea4" stroke-width="0.8" opacity="0.6" stroke-linecap="round"/><path d="M575.09 173.55 C576.66 172.82 581.49 170.00 584.5 169.16 C587.51 168.32 591.69 168.63 593.13 168.53" fill="none" stroke="#d0d4da" stroke-width="0.7" opacity="0.6" stroke-linecap="round"/><path d="M599.41 178.26 C599.80 179.57 601.31 183.36 601.76 186.11 C602.21 188.86 602.34 192.26 602.08 194.74 C601.82 197.22 600.51 199.97 600.2 201.01" fill="none" stroke="#9a9ea4" stroke-width="0.9" opacity="0.6" stroke-linecap="round"/><path d="M597.37 181.4 C597.68 182.71 598.99 186.62 599.25 189.24 C599.51 191.86 598.99 195.78 598.94 197.09" fill="none" stroke="#70747a" stroke-width="0.8" opacity="0.6" stroke-linecap="round"/><path d="M565.68 226.9 C566.07 228.99 566.85 235.28 568.03 239.46 C569.21 243.65 571.96 249.92 572.74 252.01" fill="none" stroke="#1c1e22" stroke-width="0.8" opacity="0.3" stroke-linecap="round"/><path d="M614.32 223.76 C614.97 225.59 617.20 230.56 618.24 234.75 C619.28 238.94 620.20 246.52 620.59 248.87" fill="none" stroke="#6e7278" stroke-width="1.4" opacity="0.3" stroke-linecap="round"/><path d="M590.78 256.72 C593.13 255.94 600.45 253.32 604.9 252.01 C609.35 250.70 615.37 249.39 617.46 248.87" fill="none" stroke="#50545a" stroke-width="1.2" opacity="0.3" stroke-linecap="round"/></svg>
<span class="t" style="left:557.11px;top:281.99px;font-size:11px;color:#1e1e1e;transform:scaleX(0.9329);">Logo</span>
<div style="left:589px;top:277px;width:20px;height:20px;background:#dedede;border:1px solid #777;"></div>
<div style="left:612px;top:277px;width:19px;height:20px;background:#ededed;border:1px solid #d6d6d6;"></div>
<svg style="left:591.2px;top:279px;" width="16" height="16" viewBox="0 0 32 32"><path d="M12 3h8v9h9v8h-9v9h-8v-9H3v-8h9z" fill="#2fc02f" stroke="#0f7a12" stroke-width="1.6" stroke-linejoin="round"/><path d="M13.5 5h5v8.5H27v2H13.5z" fill="#8ff08a" opacity=".6"/></svg>
<svg style="left:613.5px;top:279px;" width="16" height="16" viewBox="0 0 32 32"><rect x="4" y="12.5" width="24" height="7" rx="1.5" fill="#eda3ae" stroke="#dc8b98" stroke-width="1"/></svg>
<div style="left:23px;top:309px;width:508px;height:159px;background:#f0f0f0;border:1px solid #dcdcdc;border-radius:4px;"></div>
<span class="t" style="left:70.26px;top:317.60px;font-size:12px;color:#f00;font-weight:bold;transform:scaleX(0.9855);">Domicilio Genérico (Principal)</span>
<span class="t" style="left:370.35px;top:317.60px;font-size:12px;color:#f00;font-weight:bold;transform:scaleX(0.9967);">Domicilio</span>
<div style="left:33px;top:333px;width:228px;height:127px;background:#fff;"></div>
<div style="left:261px;top:333px;width:16px;height:127px;background:#f0f0f0;"></div>
<svg style="left:264.8px;top:339.5px;" width="8" height="6" viewBox="0 0 8 6"><path d="M1 4.6 L4 1.6 L7 4.6" stroke="#c4c4c4" stroke-width="1.1" fill="none"/></svg>
<svg style="left:264.8px;top:448.5px;" width="8" height="6" viewBox="0 0 8 6"><path d="M1 1.4 L4 4.4 L7 1.4" stroke="#c4c4c4" stroke-width="1.1" fill="none"/></svg>
<div style="left:277px;top:333px;width:228px;height:127px;background:#fff;"></div>
<div style="left:505px;top:333px;width:15px;height:127px;background:#f0f0f0;"></div>
<svg style="left:508.25px;top:339.5px;" width="8" height="6" viewBox="0 0 8 6"><path d="M1 4.6 L4 1.6 L7 4.6" stroke="#c4c4c4" stroke-width="1.1" fill="none"/></svg>
<svg style="left:508.25px;top:448.5px;" width="8" height="6" viewBox="0 0 8 6"><path d="M1 1.4 L4 4.4 L7 1.4" stroke="#c4c4c4" stroke-width="1.1" fill="none"/></svg>
<span class="t" style="left:34.91px;top:335.49px;font-size:11px;color:#1e1e1e;transform:scaleX(0.9333);">Pruebas Pruebas, Pruebas</span>
<span class="t" style="left:34.88px;top:349.89px;font-size:11px;color:#1e1e1e;transform:scaleX(0.9618);">Pruebas@gmail.com</span>
<div style="left:657px;top:161px;width:220px;height:310px;background:#f6f6f8;border:1px solid #d4d4d4;border-radius:4px;"></div>
<div style="left:659px;top:192px;width:214px;height:277px;background:#e4e8f3;"></div>
<div style="left:658px;top:164px;width:218px;height:26px;background:#f0f0f0;"></div>
<div style="left:659px;top:168px;width:57px;height:22px;background:#2b579a;"></div>
<div style="left:658px;top:189px;width:217px;height:4px;background:#2b579a;"></div>
<span class="t" style="left:666.20px;top:173.79px;font-size:11px;color:#fff;transform:scaleX(0.9470);">Resumen</span>
<span class="t" style="left:722.67px;top:173.79px;font-size:11px;color:#1e1e1e;transform:scaleX(0.9801);">Documentos</span>
<svg style="left:844.2px;top:173.8px;" width="9" height="6" viewBox="0 0 9 6"><path d="M0.4 0.6 H8.6 L4.5 5.2 Z" fill="#000"/></svg>
<div style="left:664px;top:208px;width:202px;height:27px;background:#f0f0f0;border:1px solid #8f8f8f;border-radius:3.5px;box-shadow:1px 1px 0 #fff;"></div>
<div style="left:669px;top:208px;width:138px;height:1px;background:#f0f0f0;"></div>
<span class="t" style="left:670.65px;top:202.68px;font-size:10.5px;color:#f00;font-weight:bold;font-family:'DejaVu Sans','Liberation Sans',sans-serif;transform:scaleX(0.9521);">Nº total de expedientes</span>
<span class="t" style="left:668.45px;top:217.89px;font-size:11px;color:#1e1e1e;transform:scaleX(0.9984);">59</span>
<div style="left:664px;top:252px;width:202px;height:70px;background:#f0f0f0;border:1px solid #8f8f8f;border-radius:3.5px;box-shadow:1px 1px 0 #fff;"></div>
<div style="left:669px;top:252px;width:52px;height:1px;background:#f0f0f0;"></div>
<span class="t" style="left:670.64px;top:246.18px;font-size:10.5px;color:#f00;font-weight:bold;font-family:'DejaVu Sans','Liberation Sans',sans-serif;transform:scaleX(0.9602);">Historial</span>
<span class="t" style="left:668.85px;top:261.79px;font-size:11px;color:#1e1e1e;transform:scaleX(1.0062);">Alta: 25/02/2025</span>
<span class="t" style="left:781.56px;top:261.79px;font-size:11px;color:#1e1e1e;transform:scaleX(0.9820);">Usuario:</span>
<span class="t" style="left:668.85px;top:276.29px;font-size:11px;color:#1e1e1e;transform:scaleX(0.8704);">ALBERTO MP</span>
<span class="t" style="left:668.02px;top:290.39px;font-size:11px;color:#1e1e1e;transform:scaleX(1.0315);">Ult.Modif: 06/08/2025</span>
<span class="t" style="left:781.56px;top:290.39px;font-size:11px;color:#1e1e1e;transform:scaleX(0.9820);">Usuario:</span>
<span class="t" style="left:668.85px;top:304.99px;font-size:11px;color:#1e1e1e;transform:scaleX(0.8704);">ALBERTO MP</span>
<div style="left:11px;top:490px;width:866px;height:194px;background:#e4e8f3;border:1px solid #dadada;border-radius:4px;box-shadow:inset 0 0 0 1px #f4f6fa;"></div>
<div style="left:17px;top:490px;width:70px;height:2px;background:#fff;"></div>
<span class="t" style="left:19.11px;top:483.90px;font-size:12px;color:#6b6b6b;font-weight:bold;transform:scaleX(0.9787);">Otros datos</span>
<span class="t" style="left:33.77px;top:507.59px;font-size:11px;color:#1e1e1e;transform:scaleX(0.9515);">Observaciones</span>
<svg style="left:112px;top:506.6px;" width="14" height="13.5" viewBox="0 0 28 27"><path d="M17.4 15.8 L24.4 22.4" stroke="#c98a1c" stroke-width="5.8" stroke-linecap="round"/><path d="M17.8 15.6 L24.4 21.8" stroke="#ffc23c" stroke-width="3.2" stroke-linecap="round"/>
<circle cx="9.6" cy="8.6" r="8.3" fill="url(#mgl)" stroke="#7c86b0" stroke-width="1.9"/></svg>
<div style="left:31px;top:522px;width:366px;height:74px;background:#fff;border:1px solid #adb0b7;"></div>
<div style="left:380px;top:523px;width:16px;height:72px;background:#f0f0f0;"></div>
<svg style="left:384px;top:529.3px;" width="8" height="6" viewBox="0 0 8 6"><path d="M1 4.6 L4 1.6 L7 4.6" stroke="#c4c4c4" stroke-width="1.1" fill="none"/></svg>
<svg style="left:384px;top:583.7px;" width="8" height="6" viewBox="0 0 8 6"><path d="M1 1.4 L4 4.4 L7 1.4" stroke="#c4c4c4" stroke-width="1.1" fill="none"/></svg>
<span class="t" style="left:132.53px;top:605.39px;font-size:11px;color:#1e1e1e;transform:scaleX(0.9452);">Compañia</span>
<span class="t" style="left:132.20px;top:628.59px;font-size:11px;color:#1e1e1e;transform:scaleX(0.9421);">Responsable 2</span>
<span class="t" style="left:132.16px;top:653.59px;font-size:11px;color:#1e1e1e;transform:scaleX(0.9877);">Número Externo</span>
<svg style="left:210.4px;top:603px;" width="14" height="13.5" viewBox="0 0 28 27"><path d="M17.4 15.8 L24.4 22.4" stroke="#c98a1c" stroke-width="5.8" stroke-linecap="round"/><path d="M17.8 15.6 L24.4 21.8" stroke="#ffc23c" stroke-width="3.2" stroke-linecap="round"/>
<circle cx="9.6" cy="8.6" r="8.3" fill="url(#mgl)" stroke="#7c86b0" stroke-width="1.9"/></svg>
<svg style="left:210.4px;top:627.6px;" width="14" height="13.5" viewBox="0 0 28 27"><path d="M17.4 15.8 L24.4 22.4" stroke="#c98a1c" stroke-width="5.8" stroke-linecap="round"/><path d="M17.8 15.6 L24.4 21.8" stroke="#ffc23c" stroke-width="3.2" stroke-linecap="round"/>
<circle cx="9.6" cy="8.6" r="8.3" fill="url(#mgl)" stroke="#7c86b0" stroke-width="1.9"/></svg>
<div style="left:230px;top:600px;width:166px;height:21px;background:#fff;border:1px solid #adb0b7;"></div>
<div style="left:230px;top:624px;width:166px;height:21px;background:#fff;border:1px solid #adb0b7;"></div>
<div style="left:231px;top:650px;width:166px;height:22px;background:#fff;border:1px solid #adb0b7;"></div>
<svg style="left:32px;top:630px;" width="26" height="22" viewBox="32 630 26 22"><path d="M34.36 633.23 L35.23 632.36 L43.53 632.36 L44.76 634.82 L50.98 634.82 L51.84 635.75 L51.84 649.84 L34.36 649.84Z" fill="url(#fo2)" stroke="#a67c3c" stroke-width="0.8" stroke-linejoin="round"/><path d="M37.75 637.71 L55.46 637.71 L51.84 649.99 L34.36 649.99Z" fill="url(#fo1)" stroke="#a8762c" stroke-width="0.8" stroke-linejoin="round"/><path d="M38.48 638.43 L54.37 638.43" fill="none" stroke="#fff8a0" stroke-width="0.6"/></svg>
<svg style="left:64px;top:631px;" width="24" height="24" viewBox="64 631 24 24"><path d="M66.29 651.72 C66.29 651.55 71.83 651.29 74.24 651.29 C76.65 651.29 80.75 651.55 80.75 651.72 C80.75 651.89 76.65 652.30 74.24 652.3 C71.83 652.30 66.29 651.89 66.29 651.72Z" fill="#3c78f0" opacity="0.75"/><path d="M69.76 647.39 L81.61 634.53 L85.08 637.56 L72.65 650.57Z" fill="#2c2c30"/><path d="M70.63 646.95 L82.05 634.67 L83.49 635.97 L71.79 648.25Z" fill="#c8c8cc"/><path d="M81.61 634.53 L83.06 633.23 L85.95 635.75 L85.08 637.56Z" fill="#3c8cf0"/><path d="M83.64 634.67 L85.44 636.12 L85.95 636.84 L85.08 637.71Z" fill="#1838b0"/><path d="M69.18 645.51 L71.35 644.21 L74.24 647.68 L72.44 649.84Z" fill="#4c9cf4"/><path d="M71.35 647.68 L73.66 648.54 L72.65 650.57Z" fill="#1838b0"/><path d="M67.6 649.12 L69.76 647.39 L72.65 650.57 L70.63 651.43 L67.88 651.29Z" fill="#585860"/><path d="M66.15 650.93 C66.23 650.33 67.19 649.19 67.88 649.27 C68.57 649.35 70.35 650.83 70.27 651.43 C70.19 652.03 68.07 652.96 67.38 652.88 C66.69 652.80 66.07 651.53 66.15 650.93Z" fill="#1030c8"/></svg>
<span class="t" style="left:409.33px;top:514.79px;font-size:11px;color:#1e1e1e;transform:scaleX(0.9398);">Clasificaciones</span>
<svg style="left:491px;top:513.6px;" width="14" height="13.5" viewBox="0 0 28 27"><path d="M17.4 15.8 L24.4 22.4" stroke="#c98a1c" stroke-width="5.8" stroke-linecap="round"/><path d="M17.8 15.6 L24.4 21.8" stroke="#ffc23c" stroke-width="3.2" stroke-linecap="round"/>
<circle cx="9.6" cy="8.6" r="8.3" fill="url(#mgl)" stroke="#7c86b0" stroke-width="1.9"/></svg>
<div style="left:509px;top:510px;width:99px;height:21px;background:#fff;border:1px solid #adb0b7;"></div>
<svg style="left:614px;top:513.6px;" width="14" height="13.5" viewBox="0 0 28 27"><path d="M17.4 15.8 L24.4 22.4" stroke="#c98a1c" stroke-width="5.8" stroke-linecap="round"/><path d="M17.8 15.6 L24.4 21.8" stroke="#ffc23c" stroke-width="3.2" stroke-linecap="round"/>
<circle cx="9.6" cy="8.6" r="8.3" fill="url(#mgl)" stroke="#7c86b0" stroke-width="1.9"/></svg>
<div style="left:631px;top:510px;width:99px;height:21px;background:#fff;border:1px solid #adb0b7;"></div>
<svg style="left:739px;top:513.6px;" width="14" height="13.5" viewBox="0 0 28 27"><path d="M17.4 15.8 L24.4 22.4" stroke="#c98a1c" stroke-width="5.8" stroke-linecap="round"/><path d="M17.8 15.6 L24.4 21.8" stroke="#ffc23c" stroke-width="3.2" stroke-linecap="round"/>
<circle cx="9.6" cy="8.6" r="8.3" fill="url(#mgl)" stroke="#7c86b0" stroke-width="1.9"/></svg>
<div style="left:754px;top:510px;width:100px;height:21px;background:#fff;border:1px solid #adb0b7;"></div>
<span class="t" style="left:409.00px;top:564.89px;font-size:11px;color:#1e1e1e;transform:scaleX(0.9404);">Responsable</span>
<svg style="left:491px;top:562.2px;" width="14" height="13.5" viewBox="0 0 28 27"><path d="M17.4 15.8 L24.4 22.4" stroke="#c98a1c" stroke-width="5.8" stroke-linecap="round"/><path d="M17.8 15.6 L24.4 21.8" stroke="#ffc23c" stroke-width="3.2" stroke-linecap="round"/>
<circle cx="9.6" cy="8.6" r="8.3" fill="url(#mgl)" stroke="#7c86b0" stroke-width="1.9"/></svg>
<div style="left:509px;top:558px;width:212px;height:22px;background:#fff;border:1px solid #adb0b7;"></div>
<span class="t" style="left:734.70px;top:544.19px;font-size:11px;color:#1e1e1e;transform:scaleX(0.9467);">F. Protec. Datos</span>
<div style="left:727px;top:558px;width:127px;height:22px;background:#fff;border:1px solid #b7c9e8;"></div>
<span class="t" style="left:737.55px;top:562.70px;font-size:12px;color:#333;transform:scaleX(1.0000);">/</span>
<span class="t" style="left:750.95px;top:562.70px;font-size:12px;color:#333;transform:scaleX(1.0000);">/</span>
<div style="left:804px;top:560px;width:16px;height:18px;background:linear-gradient(#d9e7fb,#c3d8f7);border:1px solid #8fb0e2;"></div>
<div style="left:805px;top:568px;width:14px;height:1px;background:#8fb0e2;"></div>
<svg style="left:808.3px;top:562.6px;" width="7" height="4" viewBox="0 0 7 4"><path d="M0.4 3.6 L3.5 0.4 L6.6 3.6 Z" fill="#10204a"/></svg>
<svg style="left:808.3px;top:571.4px;" width="7" height="4" viewBox="0 0 7 4"><path d="M0.4 0.4 L3.5 3.6 L6.6 0.4 Z" fill="#10204a"/></svg>
<div style="left:821px;top:560px;width:14px;height:18px;background:linear-gradient(#d9e7fb,#c3d8f7);border:1px solid #8fb0e2;"></div>
<svg style="left:823.6px;top:564.4px;" width="9" height="9" viewBox="0 0 9 9"><path d="M1.2 1.2 L7.8 7.8 M7.8 1.2 L1.2 7.8" stroke="#d0202c" stroke-width="1.9" fill="none"/></svg>
<div style="left:837px;top:560px;width:15px;height:18px;background:linear-gradient(#d9e7fb,#c3d8f7);border:1px solid #8fb0e2;"></div>
<svg style="left:840.6px;top:567.2px;" width="8" height="5" viewBox="0 0 8 5"><path d="M0.3 0.5 H7.7 L4 4.4 Z" fill="#10204a"/></svg>
<div style="left:614px;top:597px;width:109px;height:22px;background:#e1e1e1;border:1px solid #9a9a9a;"></div>
<span class="t" style="left:625.15px;top:602.79px;font-size:11px;color:#1e1e1e;transform:scaleX(0.9642);">Aplicación externa</span>
<div style="left:728px;top:596px;width:126px;height:22px;background:#fff;border:1px solid #adb0b7;"></div>
<span class="t" style="left:409.41px;top:629.59px;font-size:11px;color:#1e1e1e;transform:scaleX(0.9738);">Seguimiento</span>
<svg style="left:491px;top:629.4px;" width="14" height="13.5" viewBox="0 0 28 27"><path d="M17.4 15.8 L24.4 22.4" stroke="#c98a1c" stroke-width="5.8" stroke-linecap="round"/><path d="M17.8 15.6 L24.4 21.8" stroke="#ffc23c" stroke-width="3.2" stroke-linecap="round"/>
<circle cx="9.6" cy="8.6" r="8.3" fill="url(#mgl)" stroke="#7c86b0" stroke-width="1.9"/></svg>
<div style="left:509px;top:628px;width:345px;height:43px;background:#fff;border:1px solid #adb0b7;"></div>
<div style="left:837px;top:629px;width:16px;height:41px;background:#f0f0f0;"></div>
<svg style="left:841.15px;top:635.5px;" width="8" height="6" viewBox="0 0 8 6"><path d="M1 4.6 L4 1.6 L7 4.6" stroke="#c4c4c4" stroke-width="1.1" fill="none"/></svg>
<svg style="left:841.15px;top:659px;" width="8" height="6" viewBox="0 0 8 6"><path d="M1 1.4 L4 4.4 L7 1.4" stroke="#c4c4c4" stroke-width="1.1" fill="none"/></svg>
<div style="left:401px;top:640px;width:89px;height:22px;background:#e0e0e0;border:1px solid #9a9a9a;"></div>
<span class="t" style="left:409.33px;top:646.09px;font-size:11px;color:#1e1e1e;transform:scaleX(0.9452);">Códigos oficina</span>
</div>
</body>
</html>
